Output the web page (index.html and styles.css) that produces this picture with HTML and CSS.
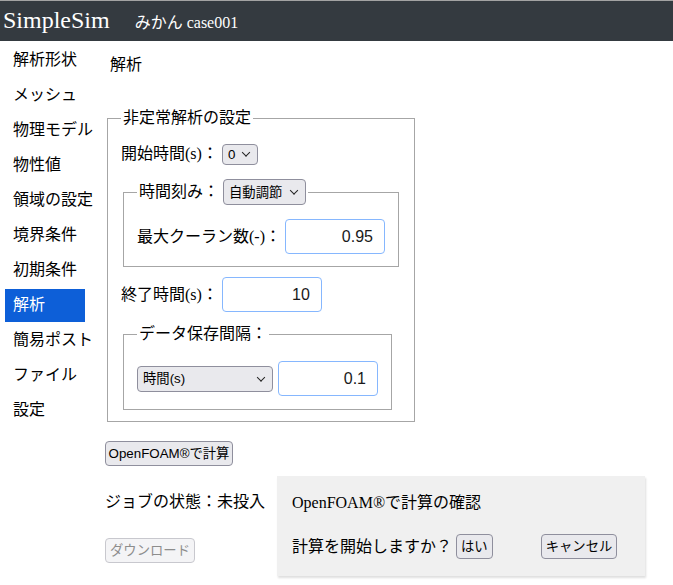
FILE: index.html
```html
<!DOCTYPE html>
<html lang="ja">
<head>
<meta charset="utf-8">
<title>SimpleSim</title>
<link rel="stylesheet" href="styles.css">
</head>
<body>
<header class="topbar">
  <span class="brand">SimpleSim</span>
  <span class="case">みかん case001</span>
</header>
<div class="layout">
  <nav class="sidebar">
    <a class="nav-item">解析形状</a>
    <a class="nav-item">メッシュ</a>
    <a class="nav-item">物理モデル</a>
    <a class="nav-item">物性値</a>
    <a class="nav-item">領域の設定</a>
    <a class="nav-item">境界条件</a>
    <a class="nav-item">初期条件</a>
    <a class="nav-item active">解析</a>
    <a class="nav-item">簡易ポスト</a>
    <a class="nav-item">ファイル</a>
    <a class="nav-item">設定</a>
  </nav>
  <main class="main">
    <div class="page-title">解析</div>
    <fieldset class="fs fs-outer">
      <legend class="lg">非定常解析の設定</legend>
      <div class="row row-start">
        <label>開始時間(s)：</label>
        <span class="sel sel-start"><select><option>0</option></select></span>
      </div>
      <fieldset class="fs fs-step">
        <legend class="lg"><span class="lg-inner">時間刻み：<span class="sel sel-step"><select><option>自動調節</option></select></span></span></legend>
        <div class="row">
          <label>最大クーラン数(-)：</label>
          <input class="num push" type="text" value="0.95">
        </div>
      </fieldset>
      <div class="row row-end">
        <label>終了時間(s)：</label>
        <input class="num" type="text" value="10">
      </div>
      <fieldset class="fs fs-save">
        <legend class="lg">データ保存間隔：</legend>
        <div class="row row-save">
          <span class="sel sel-save"><select><option>時間(s)</option></select></span>
          <input class="num" type="text" value="0.1">
        </div>
      </fieldset>
    </fieldset>
    <button class="btn btn-run">OpenFOAM®で計算</button>
    <div class="status">ジョブの状態：未投入</div>
    <button class="btn btn-dl" disabled>ダウンロード</button>
  </main>
</div>
<div class="dialog">
  <div class="dialog-title">OpenFOAM®で計算の確認</div>
  <div class="dialog-row">
    <span>計算を開始しますか？</span>
    <button class="btn btn-yes">はい</button>
    <button class="btn btn-cancel">キャンセル</button>
  </div>
</div>
</body>
</html>
```
FILE: styles.css
```css
body {
  margin: 0;
  font-family: "Liberation Serif", "Noto Sans CJK JP", serif;
  font-size: 16px;
  line-height: 24px;
  color: #000;
  background: #fff;
}

.topbar {
  height: 40px;
  border-top: 1px solid #a3a3a3;
  background: #343a40;
  color: #fff;
  display: flex;
  align-items: baseline;
  padding: 0 3px;
}

.brand {
  font-size: 24px;
  line-height: 38px;
}

.case {
  margin-left: 25px;
  font-size: 16px;
}

.layout {
  display: flex;
  align-items: flex-start;
}

.sidebar {
  flex: none;
  width: 80px;
  margin-left: 5px;
  padding-top: 3px;
  display: flex;
  flex-direction: column;
  gap: 2px;
  font-family: "Noto Sans CJK JP", sans-serif;
}

.nav-item {
  display: block;
  box-sizing: border-box;
  height: 33px;
  line-height: 28px;
  padding-left: 8px;
  color: #000;
  white-space: nowrap;
}

.nav-item.active {
  background: #0d5fd8;
  color: #fff;
}

.main {
  margin-left: 20px;
}

.page-title {
  margin-top: 12px;
  padding-left: 5px;
}

.fs {
  margin: 0;
  border: 1px solid #a6a6a6;
  padding: 0 13px;
  min-width: 0;
  box-sizing: border-box;
}

.fs-outer {
  width: 308px;
  margin: 29px 0 0 2px;
  padding-top: 12px;
  padding-bottom: 11px;
}

.lg {
  padding: 0 2px;
  line-height: 24px;
}

.lg-inner {
  display: inline-flex;
  align-items: center;
  gap: 4px;
  vertical-align: top;
}

.fs-step {
  width: 276px;
  margin: 13px 0 0 2px;
  padding-top: 14px;
  padding-bottom: 12px;
}

.fs-save {
  width: 269px;
  margin: 10px 0 0 2px;
  padding-top: 15px;
  padding-bottom: 13px;
}

.row {
  display: flex;
  align-items: center;
  gap: 4px;
}

.row-start {
  height: 24px;
}

.row-end {
  margin-top: 10px;
}

.row-save {
  gap: 5px;
}

.num {
  width: 100px;
  height: 35px;
  box-sizing: border-box;
  margin: 0;
  border: 1px solid #86b7fe;
  border-radius: 4px;
  padding: 0 11px;
  text-align: right;
  font: 16px "Liberation Sans", sans-serif;
  color: #1a1a1a;
  background: #fff;
}

.push {
  margin-left: auto;
}

.sel {
  position: relative;
  display: inline-block;
}

.sel::after {
  content: "";
  position: absolute;
  right: 9px;
  top: 50%;
  width: 5px;
  height: 5px;
  border-right: 1.5px solid #222;
  border-bottom: 1.5px solid #222;
  transform: translateY(-75%) rotate(45deg);
  pointer-events: none;
}

.sel select {
  -webkit-appearance: none;
  appearance: none;
  display: block;
  margin: 0;
  box-sizing: border-box;
  border: 1px solid #8f8f9d;
  border-radius: 4px;
  background: #e9e9ed;
  font: 13.33px "Liberation Sans", "Noto Sans CJK JP", sans-serif;
  color: #000;
  padding: 0 0 0 5px;
}

.sel-start select {
  width: 36px;
  height: 21px;
}

.sel-step select {
  width: 83px;
  height: 26px;
}

.sel-save select {
  width: 136px;
  height: 26px;
}

.btn {
  display: block;
  margin: 0;
  box-sizing: border-box;
  height: 25px;
  padding: 0 4px;
  border: 1px solid #8f8f9d;
  border-radius: 4px;
  background: #e9e9ed;
  font: 13.33px "Liberation Sans", "Noto Sans CJK JP", sans-serif;
  line-height: 23px;
  color: #000;
  white-space: nowrap;
}

.btn-run {
  margin-top: 19px;
  width: 128px;
  padding: 0;
}

.status {
  margin-top: 24px;
}

.btn-dl {
  margin-top: 24px;
  color: #8d8d8d;
  background: #f4f4f6;
  border-color: #c8c8ce;
}

.dialog {
  position: absolute;
  left: 277px;
  top: 476px;
  width: 368px;
  height: 100px;
  box-sizing: border-box;
  padding: 15px 15px 0;
  background: #f0f0f0;
  box-shadow: 1px 2px 2px rgba(0, 0, 0, 0.13);
}

.dialog-title {
  line-height: 24px;
}

.dialog-row {
  margin-top: 19px;
  height: 25px;
  display: flex;
  align-items: center;
}

.btn-yes {
  margin-left: 4px;
}

.btn-cancel {
  margin-left: 48px;
}
```
